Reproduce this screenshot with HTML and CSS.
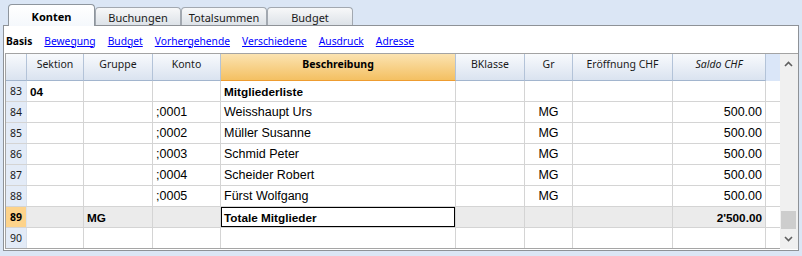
FILE: index.html
```html
<!DOCTYPE html>
<html>
<head>
    <title>Konten</title>
    <link rel="stylesheet" href="styles.css">
</head>
<body>
    <div class="tabs">
        <div class="tab active">Konten</div>
        <div class="tab">Buchungen</div>
        <div class="tab">Totalsummen</div>
        <div class="tab">Budget</div>
    </div>

    <div class="panel">
        <div class="views">
            <b>Basis</b>
            <a href="#">Bewegung</a>
            <a href="#">Budget</a>
            <a href="#">Vorhergehende</a>
            <a href="#">Verschiedene</a>
            <a href="#">Ausdruck</a>
            <a href="#">Adresse</a>
        </div>

        <div class="sheet">
            <div class="cols">
                <div class="row head">
                    <div class="c corner"></div>
                    <div class="c">Sektion</div>
                    <div class="c">Gruppe</div>
                    <div class="c">Konto</div>
                    <div class="c cur">Beschreibung</div>
                    <div class="c">BKlasse</div>
                    <div class="c">Gr</div>
                    <div class="c">Eröffnung CHF</div>
                    <div class="c"><i>Saldo CHF</i></div>
                    <div class="c fill"></div>
                </div>
                <div class="row">
                    <div class="c num">83</div>
                    <div class="c b">04</div>
                    <div class="c"></div>
                    <div class="c"></div>
                    <div class="c b">Mitgliederliste</div>
                    <div class="c"></div>
                    <div class="c mid"></div>
                    <div class="c"></div>
                    <div class="c amt"></div>
                    <div class="c fill"></div>
                </div>
                <div class="row">
                    <div class="c num">84</div>
                    <div class="c"></div>
                    <div class="c"></div>
                    <div class="c">;0001</div>
                    <div class="c">Weisshaupt Urs</div>
                    <div class="c"></div>
                    <div class="c mid">MG</div>
                    <div class="c"></div>
                    <div class="c amt">500.00</div>
                    <div class="c fill"></div>
                </div>
                <div class="row">
                    <div class="c num">85</div>
                    <div class="c"></div>
                    <div class="c"></div>
                    <div class="c">;0002</div>
                    <div class="c">Müller Susanne</div>
                    <div class="c"></div>
                    <div class="c mid">MG</div>
                    <div class="c"></div>
                    <div class="c amt">500.00</div>
                    <div class="c fill"></div>
                </div>
                <div class="row">
                    <div class="c num">86</div>
                    <div class="c"></div>
                    <div class="c"></div>
                    <div class="c">;0003</div>
                    <div class="c">Schmid Peter</div>
                    <div class="c"></div>
                    <div class="c mid">MG</div>
                    <div class="c"></div>
                    <div class="c amt">500.00</div>
                    <div class="c fill"></div>
                </div>
                <div class="row">
                    <div class="c num">87</div>
                    <div class="c"></div>
                    <div class="c"></div>
                    <div class="c">;0004</div>
                    <div class="c">Scheider Robert</div>
                    <div class="c"></div>
                    <div class="c mid">MG</div>
                    <div class="c"></div>
                    <div class="c amt">500.00</div>
                    <div class="c fill"></div>
                </div>
                <div class="row">
                    <div class="c num">88</div>
                    <div class="c"></div>
                    <div class="c"></div>
                    <div class="c">;0005</div>
                    <div class="c">Fürst Wolfgang</div>
                    <div class="c"></div>
                    <div class="c mid">MG</div>
                    <div class="c"></div>
                    <div class="c amt">500.00</div>
                    <div class="c fill"></div>
                </div>
                <div class="row total">
                    <div class="c num">89</div>
                    <div class="c"></div>
                    <div class="c b">MG</div>
                    <div class="c"></div>
                    <div class="c b sel">Totale Mitglieder</div>
                    <div class="c"></div>
                    <div class="c mid"></div>
                    <div class="c"></div>
                    <div class="c amt b">2'500.00</div>
                    <div class="c fill"></div>
                </div>
                <div class="row">
                    <div class="c num">90</div>
                    <div class="c"></div>
                    <div class="c"></div>
                    <div class="c"></div>
                    <div class="c"></div>
                    <div class="c"></div>
                    <div class="c mid"></div>
                    <div class="c"></div>
                    <div class="c amt"></div>
                    <div class="c fill"></div>
                </div>
            </div>

            <div class="scrollbar">
                <div class="arrow">
                    <svg width="9" height="6" viewBox="0 0 9 6"><polyline points="1,5 4.5,1.5 8,5" fill="none" stroke="#5f5f5f" stroke-width="1.6"/></svg>
                </div>
                <div class="track"><div class="thumb"></div></div>
                <div class="arrow">
                    <svg width="9" height="6" viewBox="0 0 9 6"><polyline points="1,1 4.5,4.5 8,1" fill="none" stroke="#5f5f5f" stroke-width="1.6"/></svg>
                </div>
            </div>
        </div>
    </div>
</body>
</html>
```

FILE: styles.css
```css
body {
    margin: 0;
    background-color: #dbe6f5;
    font-family: 'Noto Sans', sans-serif;
    color: #000;
}
.tabs {
    display: flex;
    align-items: flex-end;
    height: 25px;
    padding-left: 8px;
}
.tab {
    width: 86px;
    height: 18px;
    box-sizing: border-box;
    border: 1px solid #a2a8b0;
    border-bottom: none;
    border-radius: 4px 4px 0 0;
    background: linear-gradient(#f7f8f9, #dde2e8);
    font-size: 11px;
    color: #1a1a1a;
    display: flex;
    justify-content: center;
    align-items: center;
    padding-top: 1px;
}
.tab.active {
    width: 87px;
    height: 22px;
    margin-bottom: -1px;
    border-color: #8e959d;
    background: linear-gradient(#ffffff, #f5f8fc);
    font-weight: bold;
    color: #000;
    padding-top: 2px;
    position: relative;
    z-index: 1;
}
.panel {
    width: 796px;
    height: 226px;
    margin-left: 3px;
    box-sizing: border-box;
    border: 1px solid #8e9297;
    background: white;
}
.views {
    height: 27px;
    box-sizing: border-box;
    padding: 2px 0 0 2px;
    display: flex;
    align-items: center;
    gap: 12px;
    font-size: 10.25px;
}
.views a {
    color: #0000ff;
}
.sheet {
    display: flex;
    width: 793px;
    height: 196px;
    margin-left: 1px;
    box-sizing: border-box;
    border-top: 1px solid #a3a3a3;
    border-left: 1px solid #a3a3a3;
}
.cols {
    width: 774px;
}
.row {
    display: grid;
    grid-template-columns: 21px 57px 69px 68px 235px 69px 48px 100px 93px 14px;
    height: 21px;
    box-sizing: border-box;
    border-bottom: 1px solid #d4d4d4;
    font-family: 'Liberation Sans', Arial, sans-serif;
    font-size: 12.5px;
}
.row:last-child {
    border-bottom-color: #a5a5a5;
}
.c {
    display: flex;
    align-items: center;
    padding: 0 3px;
    border-right: 1px solid #d4d4d4;
    white-space: nowrap;
    overflow: hidden;
}
.b {
    font-weight: bold;
    font-size: 11.75px;
}
.mid {
    justify-content: center;
}
.amt {
    justify-content: flex-end;
}
.num {
    padding: 0;
    justify-content: center;
    background: #e3ebf7;
    border-right-color: #d9e1ec;
    font-family: 'Noto Sans', sans-serif;
    font-size: 10.5px;
    color: #1a1a1a;
}
.fill {
    padding: 0;
    border-right: none;
}
.head {
    height: 27px;
    border-bottom: none;
    font-family: 'Noto Sans', sans-serif;
    font-size: 10.5px;
}
.head .c {
    align-items: flex-start;
    justify-content: center;
    padding-top: 3px;
    background: linear-gradient(#f8fafd, #dae3f0);
    border-right-color: #b3c3d8;
    border-bottom: 1px solid #a2b5ce;
    color: #1a1a1a;
}
.head .cur {
    background: linear-gradient(#fbe3b1, #f4c062);
    border-bottom-color: #ee9c30;
    font-weight: bold;
    color: #000;
}
.head .fill {
    background: #dae6f8;
    border-bottom-color: #dae6f8;
}
.total .c {
    background: #ebebeb;
}
.total .num {
    background: #fdd38b;
    font-weight: bold;
    color: #000;
}
.total .fill {
    background: white;
}
.total .sel {
    background: white;
    box-shadow: inset 0 0 0 1px #000;
}
.scrollbar {
    width: 18px;
    display: flex;
    flex-direction: column;
    background: #f0f0f0;
}
.arrow {
    height: 20px;
    display: flex;
    align-items: center;
    justify-content: center;
    padding-right: 2px;
}
.track {
    flex: 1;
    display: flex;
    flex-direction: column;
    justify-content: flex-end;
}
.thumb {
    width: 15px;
    height: 18px;
    margin-left: 1px;
    background: #cdcdcd;
}
```
